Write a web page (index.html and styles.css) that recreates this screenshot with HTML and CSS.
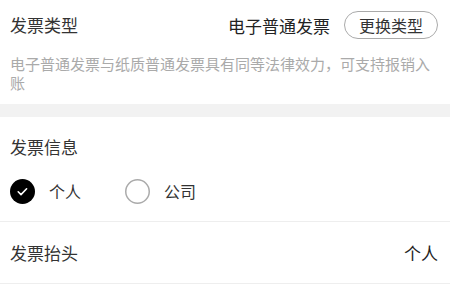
FILE: index.html
```html
<!DOCTYPE html>
<html lang="zh-CN">
<head>
<meta charset="utf-8">
<link rel="stylesheet" href="styles.css">
</head>
<body>
<div class="page">
  <section class="type-section">
    <div class="type-head">
      <span class="title">发票类型</span>
      <div class="type-right">
        <span class="type-value">电子普通发票</span>
        <button class="change-btn">更换类型</button>
      </div>
    </div>
    <p class="desc">电子普通发票与纸质普通发票具有同等法律效力，可支持报销入账</p>
  </section>
  <div class="band"></div>
  <section class="info-section">
    <div class="title">发票信息</div>
    <div class="radios">
      <label class="radio">
        <span class="dot checked">
          <svg width="25" height="25" viewBox="0 0 25 25"><circle cx="12.5" cy="12.5" r="12.5" fill="#000"/><path d="M8.2 12.8 L11 15.6 L16.6 9.8" fill="none" stroke="#fff" stroke-width="1.6" stroke-linecap="round" stroke-linejoin="round"/></svg>
        </span>
        <span class="radio-text">个人</span>
      </label>
      <label class="radio">
        <span class="dot">
          <svg width="25" height="25" viewBox="0 0 25 25"><circle cx="12.5" cy="12.5" r="11.75" fill="#fff" stroke="#aaa" stroke-width="1.5"/></svg>
        </span>
        <span class="radio-text">公司</span>
      </label>
    </div>
  </section>
  <div class="row">
    <span class="row-label">发票抬头</span>
    <span class="row-value">个人</span>
  </div>
</div>
</body>
</html>
```
FILE: styles.css
```css
* { box-sizing: border-box; }
html, body { margin: 0; padding: 0; background: #fff; }
body {
  font-family: "Noto Sans CJK SC", "Noto Sans", sans-serif;
  color: #333;
}
.page { width: 450px; }
.type-section { padding: 10px 10px 12px 10px; }
.type-head {
  display: flex;
  justify-content: space-between;
  align-items: center;
  height: 30px;
}
.title { font-size: 17px; line-height: 24px; color: #333; }
.type-right { display: flex; align-items: center; gap: 14px; }
.type-value { font-size: 17px; color: #222; }
.change-btn {
  font-family: inherit;
  font-size: 16px;
  color: #333;
  background: #fff;
  border: 1px solid #aaa;
  border-radius: 14px;
  height: 28px;
  padding: 0 14px;
  line-height: 26px;
  margin-right: 2px;
}
.desc {
  margin: 14px 0 0 0;
  font-size: 15px;
  line-height: 19px;
  color: #aaa;
}
.band { height: 13px; background: #f2f2f2; }
.info-section {
  padding: 18px 10px 17px 10px;
  border-bottom: 1px solid #eee;
}
.radios { display: flex; align-items: center; margin-top: 19px; height: 26px; }
.radio { display: flex; align-items: center; width: 115px; }
.dot { width: 25px; height: 25px; display: flex; }
.radio-text { margin-left: 14px; font-size: 16px; color: #333; }
.row {
  display: flex;
  justify-content: space-between;
  align-items: center;
  height: 62px;
  padding: 0 12px 0 10px;
  border-bottom: 1px solid #eee;
}
.row-label { font-size: 17px; color: #333; }
.row-value { font-size: 17px; color: #222; }
```
